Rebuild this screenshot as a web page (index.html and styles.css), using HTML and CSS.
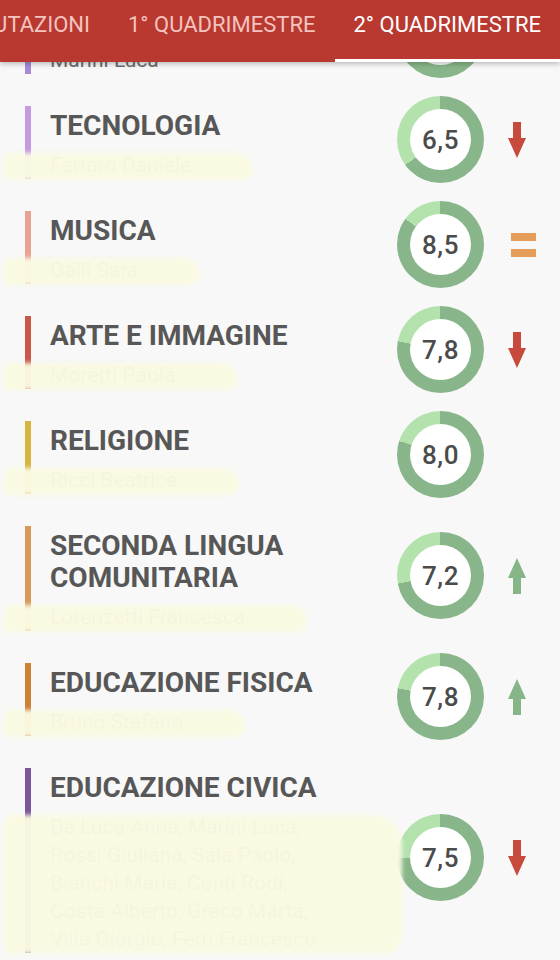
FILE: index.html
```html
<!DOCTYPE html>
<html>
    <head>
        <meta charset="utf-8">
        <title>Valutazioni - 2° Quadrimestre</title>
        <link rel="stylesheet" href="styles.css">
    </head>
    <body>
        <header class="tabs">
            <div class="tab">Valutazioni</div>
            <div class="tab">1° Quadrimestre</div>
            <div class="tab active">2° Quadrimestre</div>
        </header>

        <div class="scroller">
            <!-- la lista e' gia' scrollata: della prima materia si vede solo il fondo -->
            <main class="list">
                <div class="subject">
                    <div class="info bar-lilac">
                        <p class="name">&nbsp;</p>
                        <p class="teacher">Marini Luca</p>
                    </div>
                    <div class="grade" style="--p: 80%"><span></span></div>
                    <div class="trend"></div>
                </div>

                <div class="subject">
                    <div class="info bar-lavender">
                        <p class="name">TECNOLOGIA</p>
                        <p class="teacher scribbled">Ferraro Daniele</p>
                    </div>
                    <div class="grade" style="--p: 65%"><span>6,5</span></div>
                    <svg class="trend down" viewBox="0 0 40 40"><path d="M16 2h8v16h5l-9 20-9-20h5z"/></svg>
                </div>

                <div class="subject">
                    <div class="info bar-salmon">
                        <p class="name">MUSICA</p>
                        <p class="teacher scribbled">Galli Sara</p>
                    </div>
                    <div class="grade" style="--p: 85%"><span>8,5</span></div>
                    <svg class="trend same" viewBox="0 0 40 40"><rect x="14" y="8" width="25" height="8"/><rect x="14" y="24" width="25" height="8"/></svg>
                </div>

                <div class="subject">
                    <div class="info bar-red">
                        <p class="name">ARTE E IMMAGINE</p>
                        <p class="teacher scribbled">Moretti Paola</p>
                    </div>
                    <div class="grade" style="--p: 78%"><span>7,8</span></div>
                    <svg class="trend down" viewBox="0 0 40 40"><path d="M16 2h8v16h5l-9 20-9-20h5z"/></svg>
                </div>

                <div class="subject">
                    <div class="info bar-mustard">
                        <p class="name">RELIGIONE</p>
                        <p class="teacher scribbled">Ricci Beatrice</p>
                    </div>
                    <div class="grade" style="--p: 80%"><span>8,0</span></div>
                    <div class="trend"></div>
                </div>

                <div class="subject">
                    <div class="info bar-tan">
                        <p class="name">SECONDA LINGUA COMUNITARIA</p>
                        <p class="teacher scribbled">Lorenzetti Francesca</p>
                    </div>
                    <div class="grade" style="--p: 72%"><span>7,2</span></div>
                    <svg class="trend up" viewBox="0 0 40 40"><path d="M20 2l9 20h-5v16h-8v-16h-5z"/></svg>
                </div>

                <div class="subject">
                    <div class="info bar-orange">
                        <p class="name">EDUCAZIONE FISICA</p>
                        <p class="teacher scribbled">Bruno Stefano</p>
                    </div>
                    <div class="grade" style="--p: 78%"><span>7,8</span></div>
                    <svg class="trend up" viewBox="0 0 40 40"><path d="M20 2l9 20h-5v16h-8v-16h-5z"/></svg>
                </div>

                <div class="subject">
                    <div class="info bar-purple">
                        <p class="name">EDUCAZIONE CIVICA</p>
                        <p class="teacher scribbled">De Luca Anna, Marini Luca, Rossi Giuliana, Sala Paolo, Bianchi Maria, Conti Rodi, Costa Alberto, Greco Marta, Villa Giorgio, Ferri Francesco</p>
                    </div>
                    <div class="grade" style="--p: 75%"><span>7,5</span></div>
                    <svg class="trend down" viewBox="0 0 40 40"><path d="M16 2h8v16h5l-9 20-9-20h5z"/></svg>
                </div>
            </main>
        </div>
    </body>
</html>
```

FILE: styles.css
```css
:root {
    --red-clr: #b9382f;
    --bg-clr: #f8f8f8;
    --title-clr: #575757;
    --ring-clr: #88b68a;
    --ring-light-clr: #b3e2ad;
}

* {
    box-sizing: border-box;
}

body {
    margin: 0;
    height: 960px;
    overflow: hidden;
    background-color: var(--bg-clr);
    font-family: Roboto, 'Noto Sans', sans-serif;
}

/* tab bar */
.tabs {
    position: relative;
    z-index: 2;
    height: 62px;
    display: flex;
    justify-content: flex-end;
    overflow: hidden;
    background-color: var(--red-clr);
    box-shadow: 0 2px 5px rgba(0, 0, 0, 0.25);
}
.tab {
    flex-shrink: 0;
    padding: 0 19px 9px;
    line-height: 50px;
    font-size: 22px;
    text-transform: uppercase;
    white-space: nowrap;
    color: #f3c4bf;
    border-bottom: 3px solid transparent;
}
.tab.active {
    color: #fff;
    border-bottom-color: #fff;
}

/* lista materie */
.scroller {
    height: 898px;
    overflow: hidden;
}
.list {
    display: flex;
    flex-direction: column;
    gap: 32px;
    margin-top: -62px;
    padding: 1px 23px 0 25px;
}
.subject {
    display: flex;
    align-items: center;
}
.info {
    flex: 1;
    min-width: 0;
    padding: 4px 0 0 19px;
    border-left: 6px solid;
}
.name {
    margin: 0;
    font-size: 28px;
    line-height: 32px;
    font-weight: 700;
    color: var(--title-clr);
}
.teacher {
    position: relative;
    width: fit-content;
    max-width: 290px;
    margin: 9px 0 0;
    font-size: 21px;
    line-height: 28px;
    color: #6d6d6d;
}
/* nomi dei prof coperti con l'evidenziatore */
.teacher.scribbled::after {
    content: '';
    position: absolute;
    top: 2px;
    bottom: -1px;
    left: -46px;
    right: -62px;
    background-color: rgba(250, 250, 226, 0.97);
    border-radius: 10px 30px 18px 6px;
    filter: blur(2px);
}

.bar-lilac { border-color: #a88bd6; }
.bar-lavender { border-color: #c49be0; }
.bar-salmon { border-color: #e9a393; }
.bar-red { border-color: #c9584b; }
.bar-mustard { border-color: #d8b53f; }
.bar-tan { border-color: #d9995a; }
.bar-orange { border-color: #cf8037; }
.bar-purple { border-color: #7b569b; }

/* voto */
.grade {
    flex-shrink: 0;
    width: 87px;
    height: 87px;
    margin: -13px 0 -7px;
    display: flex;
    align-items: center;
    justify-content: center;
    border-radius: 50%;
    background: conic-gradient(var(--ring-clr) 0 var(--p), var(--ring-light-clr) var(--p) 100%);
}
.grade span {
    width: 61px;
    height: 61px;
    display: flex;
    align-items: center;
    justify-content: center;
    border-radius: 50%;
    background-color: #fff;
    font-size: 26px;
    font-weight: 500;
    letter-spacing: 0.5px;
    color: #4b4b4b;
}

.trend {
    flex-shrink: 0;
    width: 40px;
    height: 40px;
    margin: 0 0 6px 13px;
}
.trend.down { fill: #c74a3c; }
.trend.up { fill: #86b587; }
.trend.same { fill: #e59e59; }
```
